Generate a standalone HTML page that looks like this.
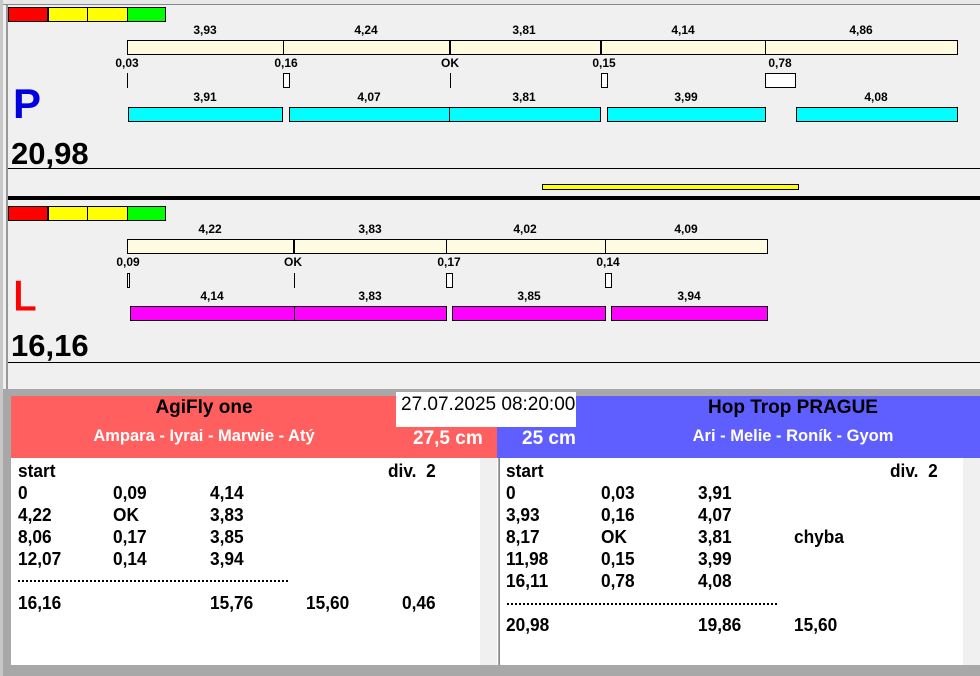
<!DOCTYPE html>
<html><head><meta charset="utf-8"><style>
*{margin:0;padding:0;box-sizing:border-box}
body{width:980px;height:676px;background:#f0f0f0;position:relative;overflow:hidden;font-family:"Liberation Sans",Arial,sans-serif}
div{position:absolute}
.y{background:#fffbe0;border:1px solid #000}
.c{background:#00ffff;border:1px solid #000}
.m{background:#ff00ff;border:1px solid #000}
.t{font-size:12px;font-weight:bold;color:#000;text-align:center;width:60px;margin-left:-30px}
.d{width:2px;background:#000}
.tk{width:1px;background:#000}
.bx{background:#fff;border:1px solid #000}
.l{font-size:18px;font-weight:bold;white-space:nowrap;transform:scaleX(.96);transform-origin:left}
</style></head><body>
<div style="left:0;top:0;width:980px;height:5px;background:#e8e8e8;border-bottom:1px solid #888"></div>
<div style="left:0;top:0;width:3px;height:676px;background:#c8c8c8"></div>
<div style="left:6px;top:5px;width:2px;height:385px;background:#999"></div>

<div style="left:8px;top:7px;width:40px;height:15px;background:#f00;border:1px solid #000"></div>
<div style="left:48px;top:7px;width:40px;height:15px;background:#ff0;border:1px solid #000"></div>
<div style="left:87px;top:7px;width:41px;height:15px;background:#ff0;border:1px solid #000"></div>
<div style="left:127px;top:7px;width:39px;height:15px;background:#0f0;border:1px solid #000"></div>

<div class="t" style="left:205px;top:23px">3,93</div>
<div class="t" style="left:366px;top:23px">4,24</div>
<div class="t" style="left:524px;top:23px">3,81</div>
<div class="t" style="left:683px;top:23px">4,14</div>
<div class="t" style="left:861px;top:23px">4,86</div>
<div class="y" style="left:127px;top:40px;width:831px;height:15px"></div>
<div class="tk" style="left:283px;top:40px;height:15px"></div>
<div class="d" style="left:449px;top:40px;height:15px"></div>
<div class="d" style="left:600px;top:40px;height:15px"></div>
<div class="tk" style="left:765px;top:40px;height:15px"></div>
<div class="t" style="left:127px;top:56px">0,03</div>
<div class="t" style="left:286px;top:56px">0,16</div>
<div class="t" style="left:450px;top:56px">OK</div>
<div class="t" style="left:604px;top:56px">0,15</div>
<div class="t" style="left:780px;top:56px">0,78</div>
<div class="tk" style="left:127px;top:73px;height:15px"></div>
<div class="bx" style="left:283px;top:73px;width:7px;height:15px"></div>
<div class="tk" style="left:450px;top:73px;height:15px"></div>
<div class="bx" style="left:601px;top:73px;width:7px;height:15px"></div>
<div class="bx" style="left:765px;top:73px;width:31px;height:15px"></div>
<div class="t" style="left:205px;top:90px">3,91</div>
<div class="t" style="left:369px;top:90px">4,07</div>
<div class="t" style="left:524px;top:90px">3,81</div>
<div class="t" style="left:686px;top:90px">3,99</div>
<div class="t" style="left:876px;top:90px">4,08</div>
<div class="c" style="left:128px;top:107px;width:155px;height:15px"></div>
<div class="c" style="left:289px;top:107px;width:312px;height:15px"></div>
<div class="tk" style="left:449px;top:107px;height:15px"></div>
<div class="c" style="left:607px;top:107px;width:159px;height:15px"></div>
<div class="c" style="left:796px;top:107px;width:162px;height:15px"></div>
<div style="left:13px;top:80px;font-size:42px;font-weight:bold;color:#0000e0">P</div>
<div style="left:11px;top:136px;font-size:31px;font-weight:bold">20,98</div>
<div style="left:8px;top:168px;width:972px;height:1px;background:#000"></div>
<div style="left:542px;top:184px;width:257px;height:6px;background:#ff0;border:1px solid #000"></div>
<div style="left:8px;top:196px;width:972px;height:4px;background:#000"></div>

<div style="left:8px;top:206px;width:40px;height:15px;background:#f00;border:1px solid #000"></div>
<div style="left:48px;top:206px;width:40px;height:15px;background:#ff0;border:1px solid #000"></div>
<div style="left:87px;top:206px;width:41px;height:15px;background:#ff0;border:1px solid #000"></div>
<div style="left:127px;top:206px;width:39px;height:15px;background:#0f0;border:1px solid #000"></div>
<div class="t" style="left:210px;top:222px">4,22</div>
<div class="t" style="left:370px;top:222px">3,83</div>
<div class="t" style="left:525px;top:222px">4,02</div>
<div class="t" style="left:686px;top:222px">4,09</div>
<div class="y" style="left:127px;top:239px;width:641px;height:15px"></div>
<div class="d" style="left:293px;top:239px;height:15px"></div>
<div class="tk" style="left:446px;top:239px;height:15px"></div>
<div class="tk" style="left:605px;top:239px;height:15px"></div>
<div class="t" style="left:128px;top:255px">0,09</div>
<div class="t" style="left:293px;top:255px">OK</div>
<div class="t" style="left:449px;top:255px">0,17</div>
<div class="t" style="left:608px;top:255px">0,14</div>
<div class="bx" style="left:127px;top:273px;width:3px;height:15px"></div>
<div class="tk" style="left:294px;top:273px;height:15px"></div>
<div class="bx" style="left:446px;top:273px;width:7px;height:15px"></div>
<div class="bx" style="left:605px;top:273px;width:7px;height:15px"></div>
<div class="t" style="left:212px;top:289px">4,14</div>
<div class="t" style="left:370px;top:289px">3,83</div>
<div class="t" style="left:529px;top:289px">3,85</div>
<div class="t" style="left:689px;top:289px">3,94</div>
<div class="m" style="left:130px;top:306px;width:317px;height:15px"></div>
<div class="tk" style="left:294px;top:306px;height:15px"></div>
<div class="m" style="left:452px;top:306px;width:154px;height:15px"></div>
<div class="m" style="left:611px;top:306px;width:157px;height:15px"></div>
<div style="left:13px;top:272px;font-size:42px;color:#f00;-webkit-text-stroke:1px #f00">L</div>
<div style="left:11px;top:328px;font-size:31px;font-weight:bold">16,16</div>
<div style="left:8px;top:362px;width:972px;height:1px;background:#000"></div>

<div style="left:3px;top:389px;width:977px;height:287px;background:#a8a8a8"></div>
<div style="left:11px;top:396px;width:487px;height:62px;background:#ff5f5f"></div>
<div style="left:497px;top:396px;width:483px;height:62px;background:#5f5fff"></div>
<div style="left:396px;top:392px;width:180px;height:35px;background:#fff;font-size:19px;padding:2px 0 0 5px;white-space:nowrap">27.07.2025 08:20:00</div>
<div style="left:11px;top:397px;width:386px;text-align:center;font-size:19px;font-weight:bold">AgiFly one</div>
<div style="left:11px;top:427px;width:386px;text-align:center;font-size:16.5px;font-weight:bold;color:#fff">Ampara - Iyrai - Marwie - Atý</div>
<div style="left:413px;top:428px;font-size:19px;font-weight:bold;color:#fff">27,5 cm</div>
<div style="left:522px;top:428px;font-size:19px;font-weight:bold;color:#fff">25 cm</div>
<div style="left:576px;top:397px;width:434px;text-align:center;font-size:19px;font-weight:bold">Hop Trop PRAGUE</div>
<div style="left:576px;top:427px;width:434px;text-align:center;font-size:16.5px;font-weight:bold;color:#fff">Ari - Melie - Roník - Gyom</div>

<div style="left:11px;top:458px;width:487px;height:207px;background:#fff"></div>
<div style="left:480px;top:458px;width:17px;height:207px;background:#f0f0f0"></div>
<div style="left:499px;top:458px;width:481px;height:207px;background:#fff;border-left:1px solid #888"></div>
<div style="left:963px;top:458px;width:17px;height:207px;background:#f0f0f0"></div>

<div class="l" style="left:18px;top:461px">start</div><div class="l" style="left:388px;top:461px">div.&nbsp; 2</div>
<div class="l" style="left:18px;top:483px">0</div><div class="l" style="left:113px;top:483px">0,09</div><div class="l" style="left:210px;top:483px">4,14</div>
<div class="l" style="left:18px;top:505px">4,22</div><div class="l" style="left:113px;top:505px">OK</div><div class="l" style="left:210px;top:505px">3,83</div>
<div class="l" style="left:18px;top:527px">8,06</div><div class="l" style="left:113px;top:527px">0,17</div><div class="l" style="left:210px;top:527px">3,85</div>
<div class="l" style="left:18px;top:549px">12,07</div><div class="l" style="left:113px;top:549px">0,14</div><div class="l" style="left:210px;top:549px">3,94</div>
<div style="left:18px;top:580px;width:270px;border-top:2px dotted #000"></div>
<div class="l" style="left:18px;top:593px">16,16</div><div class="l" style="left:210px;top:593px">15,76</div><div class="l" style="left:306px;top:593px">15,60</div><div class="l" style="left:402px;top:593px">0,46</div>

<div class="l" style="left:506px;top:461px">start</div><div class="l" style="left:890px;top:461px">div.&nbsp; 2</div>
<div class="l" style="left:506px;top:483px">0</div><div class="l" style="left:601px;top:483px">0,03</div><div class="l" style="left:698px;top:483px">3,91</div>
<div class="l" style="left:506px;top:505px">3,93</div><div class="l" style="left:601px;top:505px">0,16</div><div class="l" style="left:698px;top:505px">4,07</div>
<div class="l" style="left:506px;top:527px">8,17</div><div class="l" style="left:601px;top:527px">OK</div><div class="l" style="left:698px;top:527px">3,81</div><div class="l" style="left:794px;top:527px">chyba</div>
<div class="l" style="left:506px;top:549px">11,98</div><div class="l" style="left:601px;top:549px">0,15</div><div class="l" style="left:698px;top:549px">3,99</div>
<div class="l" style="left:506px;top:571px">16,11</div><div class="l" style="left:601px;top:571px">0,78</div><div class="l" style="left:698px;top:571px">4,08</div>
<div style="left:507px;top:603px;width:270px;border-top:2px dotted #000"></div>
<div class="l" style="left:506px;top:615px">20,98</div><div class="l" style="left:698px;top:615px">19,86</div><div class="l" style="left:794px;top:615px">15,60</div>
</body></html>
